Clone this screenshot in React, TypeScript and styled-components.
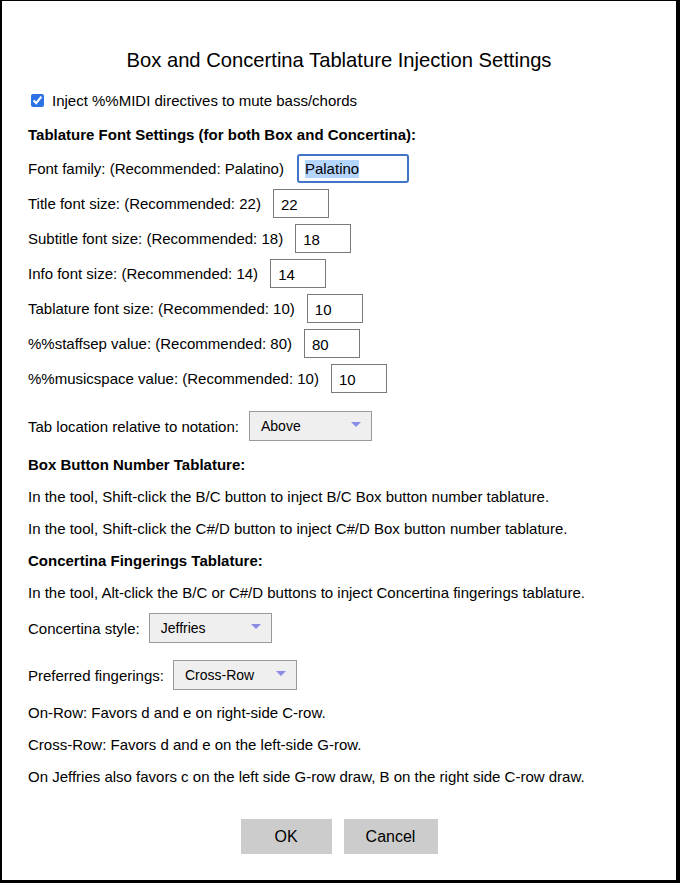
import React from 'react';
import styled, { createGlobalStyle } from 'styled-components';

const GlobalStyle = createGlobalStyle`
    html, body {
        margin: 0;
        padding: 0;
        background: #fff;
    }
    body {
        font-family: "Liberation Sans", Arial, Helvetica, sans-serif;
        color: #000;
    }
`;

const Dialog = styled.div`
    box-sizing: border-box;
    width: 680px;
    height: 883px;
    border-style: solid;
    border-color: #000;
    border-width: 1px 4px 3px 2px;
    padding: 47px 0 0 26px;
    display: flex;
    flex-direction: column;
    background: #fff;
`;

const Title = styled.h1`
    margin: 0 26px 0 0;
    font-size: 20.2px;
    line-height: 24px;
    font-weight: normal;
    text-align: center;
`;

const Block = styled.div<{ $top: number }>`
    margin-top: ${(p) => p.$top}px;
`;

const CheckRow = styled.label`
    display: flex;
    align-items: center;
    height: 20px;
    font-size: 15px;
`;

const CheckBox = styled.input`
    width: 13px;
    height: 13px;
    margin: 0 8px 0 3px;
    accent-color: #2e73e6;
`;

const Heading = styled.div`
    font-size: 15px;
    line-height: 20px;
    font-weight: bold;
`;

const Text = styled.div`
    font-size: 15px;
    line-height: 20px;
`;

const FieldRow = styled.div<{ $gap?: number }>`
    display: flex;
    align-items: center;
    font-size: 15px;
    gap: ${(p) => p.$gap ?? 10}px;
`;

const NumberField = styled.input`
    box-sizing: border-box;
    width: 56px;
    height: 29px;
    margin: 0;
    padding: 2px 7px 0;
    border: 1px solid #7a7a7a;
    border-radius: 0;
    font-family: inherit;
    font-size: 15px;
    color: #000;
    background: #fff;
    outline: none;
`;

const FocusedField = styled.div`
    box-sizing: border-box;
    width: 112px;
    height: 29px;
    padding: 1px 0 0 6px;
    border: 2px solid #3f74c6;
    border-radius: 3px;
    display: flex;
    align-items: center;
    font-size: 15px;
`;

const Selected = styled.span`
    background: #b4d5fe;
    line-height: 18px;
`;

const SelectBox = styled.div<{ $width: number }>`
    position: relative;
    box-sizing: border-box;
    width: ${(p) => p.$width}px;
    height: 30px;
    border: 1px solid #9a9a9a;
    background: #efefef;
    display: flex;
    align-items: center;
    padding-left: 11px;
    font-size: 14px;
`;

const Arrow = styled.span`
    position: absolute;
    right: 10px;
    top: 10px;
    width: 0;
    height: 0;
    border-left: 5px solid transparent;
    border-right: 5px solid transparent;
    border-top: 5px solid #8a8ce6;
`;

const ButtonBar = styled.div`
    display: flex;
    justify-content: center;
    gap: 12px;
    margin: 32px 26px 0 0;
`;

const Button = styled.button<{ $width: number }>`
    width: ${(p) => p.$width}px;
    height: 35px;
    border: none;
    border-radius: 0;
    background: #cccccc;
    font-family: inherit;
    font-size: 16px;
    color: #000;
    padding: 0;
`;

const numberFields = [
    { label: 'Title font size: (Recommended: 22)', value: '22' },
    { label: 'Subtitle font size: (Recommended: 18)', value: '18' },
    { label: 'Info font size: (Recommended: 14)', value: '14' },
    { label: 'Tablature font size: (Recommended: 10)', value: '10' },
    { label: '%%staffsep value: (Recommended: 80)', value: '80' },
    { label: '%%musicspace value: (Recommended: 10)', value: '10' },
];

const Select: React.FC<{ value: string; width: number }> = ({ value, width }) => (
    <SelectBox $width={width}>
        {value}
        <Arrow />
    </SelectBox>
);

const App: React.FC = () => (
    <>
        <GlobalStyle />
        <Dialog>
            <Title>Box and Concertina Tablature Injection Settings</Title>
            <Block $top={18}>
                <CheckRow>
                    <CheckBox type="checkbox" defaultChecked />
                    Inject %%MIDI directives to mute bass/chords
                </CheckRow>
            </Block>
            <Block $top={15}>
                <Heading>Tablature Font Settings (for both Box and Concertina):</Heading>
            </Block>
            <Block $top={9}>
                <FieldRow $gap={13}>
                    Font family: (Recommended: Palatino)
                    <FocusedField>
                        <Selected>Palatino</Selected>
                    </FocusedField>
                </FieldRow>
            </Block>
            {numberFields.map((f) => (
                <Block $top={6} key={f.label}>
                    <FieldRow $gap={12}>
                        {f.label}
                        <NumberField type="text" defaultValue={f.value} />
                    </FieldRow>
                </Block>
            ))}
            <Block $top={18}>
                <FieldRow>
                    Tab location relative to notation:
                    <Select value="Above" width={123} />
                </FieldRow>
            </Block>
            <Block $top={14}>
                <Heading>Box Button Number Tablature:</Heading>
            </Block>
            <Block $top={12}>
                <Text>In the tool, Shift-click the B/C button to inject B/C Box button number tablature.</Text>
            </Block>
            <Block $top={12}>
                <Text>In the tool, Shift-click the C#/D button to inject C#/D Box button number tablature.</Text>
            </Block>
            <Block $top={12}>
                <Heading>Concertina Fingerings Tablature:</Heading>
            </Block>
            <Block $top={12}>
                <Text>In the tool, Alt-click the B/C or C#/D buttons to inject Concertina fingerings tablature.</Text>
            </Block>
            <Block $top={10}>
                <FieldRow $gap={9}>
                    Concertina style:
                    <Select value="Jeffries" width={123} />
                </FieldRow>
            </Block>
            <Block $top={17}>
                <FieldRow $gap={9}>
                    Preferred fingerings:
                    <Select value="Cross-Row" width={124} />
                </FieldRow>
            </Block>
            <Block $top={13}>
                <Text>On-Row: Favors d and e on right-side C-row.</Text>
            </Block>
            <Block $top={12}>
                <Text>Cross-Row: Favors d and e on the left-side G-row.</Text>
            </Block>
            <Block $top={12}>
                <Text>On Jeffries also favors c on the left side G-row draw, B on the right side C-row draw.</Text>
            </Block>
            <ButtonBar>
                <Button $width={91}>OK</Button>
                <Button $width={94}>Cancel</Button>
            </ButtonBar>
        </Dialog>
    </>
);

export default App;
